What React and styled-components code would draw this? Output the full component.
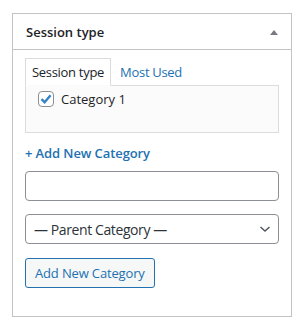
import React from "react";
import styled, { createGlobalStyle } from "styled-components";

const GlobalStyle = createGlobalStyle`
  html, body {
    margin: 0;
    padding: 0;
    background: #ffffff;
  }
  body {
    font-family: "Open Sans", "Noto Sans", sans-serif;
    color: #1d2327;
  }
  * {
    box-sizing: border-box;
  }
`;

const Page = styled.div`
  padding: 13px 0 0 12px;
`;

const Postbox = styled.div`
  width: 280px;
  height: 304px;
  border: 1px solid #c3c4c7;
  background: #ffffff;
`;

const Header = styled.div`
  height: 36px;
  border-bottom: 1px solid #c3c4c7;
  display: flex;
  align-items: center;
  justify-content: space-between;
  padding: 1px 13px 0 13px;
`;

const HeaderTitle = styled.h2`
  margin: 0;
  font-size: 13px;
  font-weight: 600;
  color: #1d2327;
`;

const Toggle = styled.span`
  width: 0;
  height: 0;
  border-left: 4px solid transparent;
  border-right: 4px solid transparent;
  border-bottom: 5px solid #787c82;
`;

const Inside = styled.div`
  padding: 8px 12px 0 12px;
`;

const Tabs = styled.ul`
  display: flex;
  margin: 0;
  padding: 0;
  list-style: none;
`;

const Tab = styled.li`
  position: relative;
  z-index: 1;
  height: 28px;
  display: flex;
  align-items: center;
  padding: 0 ${(p) => (p.$active ? "6px" : "8px")};
  font-size: 13px;
  letter-spacing: -0.3px;
  color: ${(p) => (p.$active ? "#1d2327" : "#2271b1")};
  border: 1px solid ${(p) => (p.$active ? "#dcdcde" : "transparent")};
  border-bottom: 1px solid ${(p) => (p.$active ? "#fbfbfb" : "transparent")};
  background: ${(p) => (p.$active ? "#ffffff" : "transparent")};
  margin-bottom: -1px;
`;

const TabsPanel = styled.div`
  height: 48px;
  border: 1px solid #dcdcde;
  background: #fbfbfb;
  padding: 5px 12px;
`;

const CheckRow = styled.label`
  display: flex;
  align-items: center;
  gap: 7px;
  font-size: 13px;
  line-height: 16px;
  color: #1d2327;
`;

const CheckBox = styled.span`
  width: 16px;
  height: 16px;
  border: 1px solid #8c8f94;
  border-radius: 4px;
  background: #ffffff;
  display: flex;
  align-items: center;
  justify-content: center;
`;

const AddLink = styled.a`
  display: block;
  margin-top: 11px;
  font-size: 13px;
  font-weight: 600;
  letter-spacing: -0.1px;
  color: #2271b1;
  text-decoration: none;
  line-height: 18px;
`;

const TextInput = styled.input`
  display: block;
  width: 100%;
  height: 30px;
  margin-top: 9px;
  border: 1px solid #8c8f94;
  border-radius: 4px;
  background: #ffffff;
  font: inherit;
  font-size: 14px;
  padding: 0 8px;
`;

const Select = styled.div`
  height: 30px;
  margin-top: 13px;
  border: 1px solid #8c8f94;
  border-radius: 4px;
  display: flex;
  align-items: center;
  justify-content: space-between;
  padding: 0 7px 0 8px;
  font-size: 14px;
  letter-spacing: -0.4px;
  color: #2c3338;
`;

const Button = styled.button`
  display: flex;
  align-items: center;
  height: 30px;
  margin-top: 14px;
  padding: 0 9px;
  border: 1px solid #2271b1;
  border-radius: 3px;
  background: #f6f7f7;
  color: #2271b1;
  font-family: inherit;
  font-size: 13px;
  letter-spacing: -0.15px;
`;

const Chevron = () => (
  <svg width="12" height="8" viewBox="0 0 12 8">
    <path d="M1.5 2 L6 6 L10.5 2" fill="none" stroke="#50575e" strokeWidth="1.5" />
  </svg>
);

const Check = () => (
  <svg width="14" height="14" viewBox="0 0 14 14">
    <path d="M2.5 7.2 L5.6 10.2 L11.6 3.2" fill="none" stroke="#3582c4" strokeWidth="2.4" />
  </svg>
);

export default function App() {
  return (
    <>
      <GlobalStyle />
      <Page>
        <Postbox>
          <Header>
            <HeaderTitle>Session type</HeaderTitle>
            <Toggle />
          </Header>
          <Inside>
            <Tabs>
              <Tab $active>Session type</Tab>
              <Tab>Most Used</Tab>
            </Tabs>
            <TabsPanel>
              <CheckRow>
                <CheckBox>
                  <Check />
                </CheckBox>
                Category 1
              </CheckRow>
            </TabsPanel>
            <AddLink href="#">+ Add New Category</AddLink>
            <TextInput type="text" />
            <Select>
              <span>— Parent Category —</span>
              <Chevron />
            </Select>
            <Button>Add New Category</Button>
          </Inside>
        </Postbox>
      </Page>
    </>
  );
}
